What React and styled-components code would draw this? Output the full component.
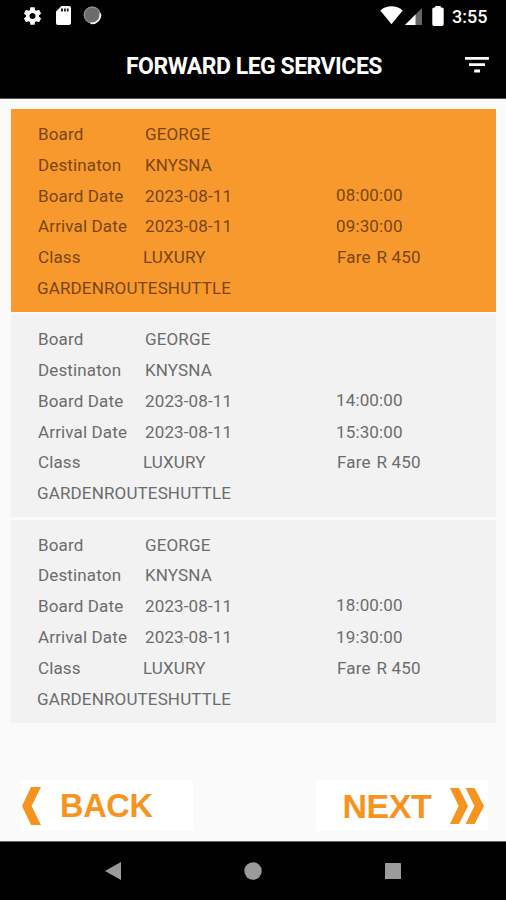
import React, { useState } from "react";
import styled, { createGlobalStyle } from "styled-components";

const services = [
	{ id: 1, departs: "08:00:00", arrives: "09:30:00" },
	{ id: 2, departs: "14:00:00", arrives: "15:30:00" },
	{ id: 3, departs: "18:00:00", arrives: "19:30:00" },
];

const ServiceCard = ({ service, selected, onSelect }) => (
	<Card $selected={selected} onClick={onSelect}>
		<Row>
			<Label>Board</Label>
			<Value>GEORGE</Value>
		</Row>
		<Row>
			<Label>Destinaton</Label>
			<Value>KNYSNA</Value>
		</Row>
		<Row>
			<Label>Board Date</Label>
			<Value>2023-08-11</Value>
			<Time $raised>{service.departs}</Time>
		</Row>
		<Row>
			<Label>Arrival Date</Label>
			<Value>2023-08-11</Value>
			<Time>{service.arrives}</Time>
		</Row>
		<Row>
			<Label>Class</Label>
			<ClassName>LUXURY</ClassName>
			<Fare>
				<span>Fare</span>
				<span>R 450</span>
			</Fare>
		</Row>
		<Row>
			<Operator>GARDENROUTESHUTTLE</Operator>
		</Row>
	</Card>
);

const App = () => {
	const [selected, setSelected] = useState(1);

	return (
		<Screen>
			<GlobalStyle />
			<StatusBar>
				<StatusIcons>
					<svg width="21" height="22" viewBox="0 0 24 24" fill="#fff">
						<path d="M19.43 12.98c.04-.32.07-.64.07-.98s-.03-.66-.07-.98l2.11-1.65c.19-.15.24-.42.12-.64l-2-3.46c-.12-.22-.39-.3-.61-.22l-2.49 1c-.52-.4-1.08-.73-1.69-.98l-.38-2.65C14.46 2.18 14.25 2 14 2h-4c-.25 0-.46.18-.49.42l-.38 2.65c-.61.25-1.17.59-1.69.98l-2.49-1c-.23-.09-.49 0-.61.22l-2 3.46c-.13.22-.07.49.12.64l2.11 1.65c-.04.32-.07.65-.07.98s.03.66.07.98l-2.11 1.65c-.19.15-.24.42-.12.64l2 3.46c.12.22.39.3.61.22l2.49-1c.52.4 1.08.73 1.69.98l.38 2.65c.03.24.24.42.49.42h4c.25 0 .46-.18.49-.42l.38-2.65c.61-.25 1.17-.59 1.69-.98l2.49 1c.23.09.49 0 .61-.22l2-3.46c.12-.22.07-.49-.12-.64l-2.11-1.65zM12 15.5c-1.93 0-3.5-1.57-3.5-3.5s1.57-3.5 3.5-3.5 3.5 1.57 3.5 3.5-1.57 3.5-3.5 3.5z" />
					</svg>
					<svg width="15" height="19" viewBox="0 0 15 19">
						<path d="M5.4 0H13a2 2 0 0 1 2 2v15a2 2 0 0 1-2 2H2a2 2 0 0 1-2-2V5.6z" fill="#fff" />
						<path d="M5 2.6h2v3H5zM8 2.6h1.8v3H8zM10.8 2.6h1.8v3h-1.8z" fill="#222" />
					</svg>
					<svg width="19" height="19" viewBox="0 0 19 19">
						<circle cx="9.2" cy="9" r="8.6" fill="#6c6c6c" />
						<circle cx="9.2" cy="9" r="7.9" fill="none" stroke="#8e8e8e" strokeWidth="1.2" />
						<path d="M17.2 7.5A8.4 8.4 0 0 1 7.5 17.2" fill="none" stroke="#f4f4f4" strokeWidth="1.8" />
					</svg>
				</StatusIcons>
				<StatusIcons>
					<svg width="23" height="19" viewBox="0 0 23 19">
						<path d="M0.3 4.4C6.6-1 16.4-1 22.7 4.4L11.5 18.2z" fill="#fff" />
					</svg>
					<SignalIcon width="17" height="17" viewBox="0 0 17 17">
						<path d="M17 0v17H0z" fill="#666" />
						<path d="M10.5 6.5V17H0z" fill="#fff" />
					</SignalIcon>
					<BatteryIcon width="12" height="20" viewBox="0 0 12 20">
						<path d="M3.3 0h5.4v1.4H10a1.7 1.7 0 0 1 1.7 1.7v15.2A1.7 1.7 0 0 1 10 20H2a1.7 1.7 0 0 1-1.7-1.7V3.1A1.7 1.7 0 0 1 2 1.4h1.3z" fill="#fff" />
					</BatteryIcon>
					<Clock>3:55</Clock>
				</StatusIcons>
			</StatusBar>
			<Header>
				<Title>FORWARD LEG SERVICES</Title>
				<FilterButton aria-label="Filter">
					<svg width="24" height="16" viewBox="0 0 24 16" fill="#fff">
						<path d="M0 0h24v2.8H0zM4 6.3h16v2.8H4zM9.2 12.6h5.8v2.8H9.2z" />
					</svg>
				</FilterButton>
			</Header>
			<List>
				{services.map((service) => (
					<ServiceCard
						key={service.id}
						service={service}
						selected={service.id === selected}
						onSelect={() => setSelected(service.id)}
					/>
				))}
			</List>
			<Actions>
				<BackButton>
					<svg width="19" height="38" viewBox="0 0 19 38" fill="#f7941f">
						<path d="M9 0h10L9.6 19 19 38H9L0 19z" />
					</svg>
					<span>BACK</span>
				</BackButton>
				<NextButton>
					<span>NEXT</span>
					<svg width="34" height="36" viewBox="0 0 34 36" fill="#f7941f">
						<path d="M0 0h9l9 18-9 18H0l8.6-18z" />
						<path d="M15.6 0h9L34 18l-9.4 18h-9l8.8-18z" />
					</svg>
				</NextButton>
			</Actions>
			<NavBar>
				<svg width="16" height="18" viewBox="0 0 16 18" fill="#9b9b9b">
					<path d="M16 0v18L0 9z" />
				</svg>
				<svg width="18" height="18" viewBox="0 0 18 18" fill="#9b9b9b">
					<circle cx="9" cy="9" r="8.7" />
				</svg>
				<svg width="16" height="16" viewBox="0 0 16 16" fill="#9b9b9b">
					<rect width="16" height="16" rx="0.6" />
				</svg>
			</NavBar>
		</Screen>
	);
};

const GlobalStyle = createGlobalStyle`
	body {
		margin: 0;
		background: #fafafa;
	}
	svg {
		display: block;
		flex-shrink: 0;
	}
`;

const Screen = styled.div`
	display: flex;
	flex-direction: column;
	width: 506px;
	height: 900px;
	overflow: hidden;
	background: #fafafa;
	font-family: Roboto, sans-serif;
`;

const StatusBar = styled.div`
	display: flex;
	justify-content: space-between;
	height: 31px;
	padding: 0 18px 0 22px;
	box-sizing: border-box;
	background: #000;
`;

const StatusIcons = styled.div`
	display: flex;
	align-items: center;
	gap: 12.5px;

	& + & {
		gap: 0;
	}
`;

const SignalIcon = styled.svg`
	margin: 2px 0 0 2px;
`;

const BatteryIcon = styled.svg`
	margin-left: 10px;
`;

const Clock = styled.span`
	width: 36px;
	margin: 1px 0 0 8px;
	color: #fff;
	font-size: 18px;
	font-weight: 500;
	white-space: nowrap;
`;

const Header = styled.header`
	display: grid;
	grid-template-columns: 60px 1fr 60px;
	align-items: center;
	height: 68px;
	box-sizing: border-box;
	border-bottom: 1px solid #555;
	background: #000;
`;

const Title = styled.h1`
	grid-column: 2;
	margin: 3px 0 0 2px;
	color: #fff;
	font-size: 23px;
	font-weight: 700;
	letter-spacing: -0.5px;
	text-align: center;
	white-space: nowrap;
`;

const FilterButton = styled.button`
	padding: 0;
	margin-left: 19px;
	border: none;
	background: none;
	cursor: pointer;
`;

const List = styled.main`
	display: flex;
	flex-direction: column;
	gap: 2.3px;
	flex: 1;
	padding: 10px 10px 0 11px;
`;

const Card = styled.section`
	height: 203px;
	padding: 9.6px 0 0 27px;
	box-sizing: border-box;
	background: ${({ $selected }) => ($selected ? "#f8992d" : "#f2f2f2")};
	color: ${({ $selected }) => ($selected ? "#794714" : "#6c6c6c")};
	font-size: 17px;
	letter-spacing: 0.14px;
	cursor: pointer;
`;

const Row = styled.div`
	display: grid;
	grid-template-columns: 107px 191px 1fr;
	align-items: center;
	height: 30.8px;
	white-space: nowrap;
`;

const Label = styled.span``;

const Value = styled.span``;

const ClassName = styled(Value)`
	margin-left: -2px;
`;

const Time = styled.span`
	padding-bottom: ${({ $raised }) => ($raised ? "2px" : "0")};
`;

const Fare = styled.span`
	display: flex;
	gap: 6px;
	margin-left: 1px;
`;

const Operator = styled.span`
	grid-column: 1 / -1;
	margin-left: -1px;
`;

const Actions = styled.div`
	display: flex;
	justify-content: space-between;
	height: 61px;
	padding: 0 18px 0 21px;
	box-sizing: border-box;
`;

const ActionButton = styled.button`
	display: flex;
	align-items: center;
	width: 172px;
	height: 51px;
	padding: 0;
	border: none;
	background: #fff;
	color: #f7941f;
	font-family: "Liberation Sans", Arial, sans-serif;
	font-weight: 700;
	cursor: pointer;

	span {
		margin-top: 2px;
	}
`;

const BackButton = styled(ActionButton)`
	gap: 19px;
	padding-left: 1px;
	font-size: 32.5px;
	letter-spacing: -0.3px;
`;

const NextButton = styled(ActionButton)`
	justify-content: space-between;
	padding: 0 4px 0 26.5px;
	font-size: 34px;
	letter-spacing: -0.5px;
`;

const NavBar = styled.nav`
	display: flex;
	align-items: center;
	justify-content: space-between;
	height: 59px;
	padding: 0 105px;
	box-sizing: border-box;
	border-top: 1px solid #666;
	background: #000;
`;

export default App;
